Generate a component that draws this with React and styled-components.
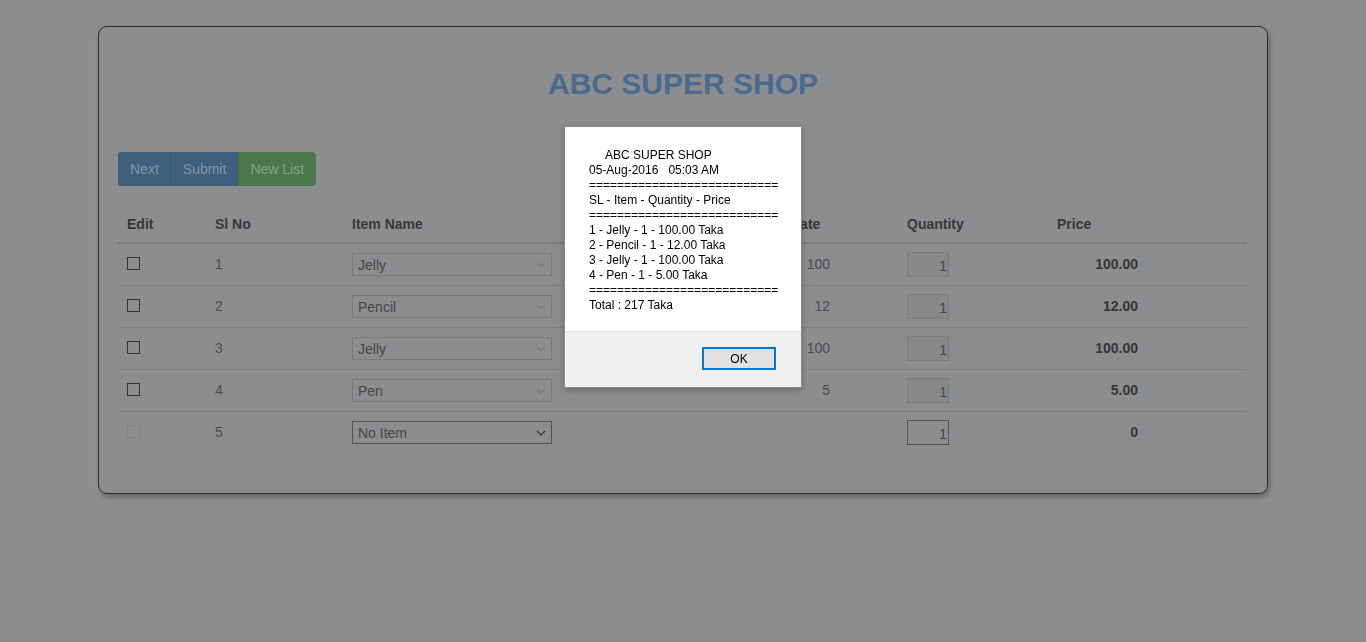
import React from "react";
import styled, { createGlobalStyle } from "styled-components";

const GlobalStyle = createGlobalStyle`
    html, body {
        margin: 0;
        padding: 0;
        background-color: #8c8d8f;
        font-family: "Liberation Sans", Arial, sans-serif;
        font-size: 14px;
        color: #4a4a4a;
    }
`;

const Page = styled.div`
    width: 1366px;
    height: 642px;
    padding-top: 26px;
    box-sizing: border-box;
    background-color: #8c8d8f;
`;

const Card = styled.div`
    width: 1170px;
    margin: 0 auto;
    box-sizing: border-box;
    padding: 20px 19px 40px;
    border: 1px solid #2a2b2d;
    border-radius: 9px;
    box-shadow: 2px 3px 5px rgba(0, 0, 0, 0.28);
`;

const Title = styled.h1`
    margin: 20px 0 52px;
    text-align: center;
    font-size: 30px;
    line-height: 33px;
    font-weight: bold;
    color: #486a8e;
`;

const ButtonGroup = styled.div`
    display: flex;
`;

const Button = styled.button`
    height: 34px;
    padding: 0 12px;
    border: none;
    font-family: "Liberation Sans", Arial, sans-serif;
    font-size: 14px;
    color: ${(p) => (p.$green ? "#8aa08b" : "#8596a6")};
    background-color: ${(p) => (p.$green ? "#4a784c" : "#3e5f7e")};
    box-shadow: ${(p) => (p.$green ? "none" : "inset -1px 0 0 #365672")};
    border-radius: ${(p) => (p.$first ? "3px 0 0 3px" : p.$last ? "0 4px 4px 0" : "0")};
`;

const Table = styled.table`
    width: 1129px;
    margin-top: 20px;
    border-collapse: collapse;
    table-layout: fixed;
`;

const Th = styled.th`
    height: 36px;
    box-sizing: border-box;
    padding: 8px;
    text-align: left;
    font-weight: bold;
    font-size: 14px;
    line-height: 20px;
    color: #373737;
    border-bottom: 2px solid #7b7c7e;
    &:first-child {
        padding-left: 9px;
    }
`;

const Td = styled.td`
    height: 42px;
    box-sizing: border-box;
    padding: 0 8px;
    border-top: 1px solid #7e7f81;
    font-size: 14px;
    color: #4a4a4a;
    vertical-align: middle;
`;

const RateTd = styled(Td)`
    text-align: right;
    padding-right: 69px;
`;

const PriceTd = styled(Td)`
    text-align: right;
    font-weight: bold;
    color: #353535;
`;

const Check = styled.span`
    display: block;
    width: 11px;
    height: 11px;
    margin: -1px 0 0 1px;
    border: 1px solid ${(p) => (p.$disabled ? "#838385" : "#333335")};
`;

const SelectBox = styled.div`
    position: relative;
    width: 200px;
    height: 23px;
    box-sizing: border-box;
    border: 1px solid ${(p) => (p.$active ? "#535355" : "#79797b")};
    padding-left: 5px;
    font-size: 14px;
    line-height: 22px;
    color: #454545;
`;

const Chevron = styled.svg`
    position: absolute;
    right: 5px;
    top: 8px;
`;

const QtyBox = styled.div`
    width: 42px;
    height: 25px;
    margin-top: 1px;
    box-sizing: border-box;
    border: 1px solid ${(p) => (p.$active ? "#535355" : "#7c7d7f")};
    background-color: ${(p) => (p.$active ? "transparent" : "#87888a")};
    text-align: right;
    padding: 3px 1px 0 0;
    font-size: 14px;
    line-height: 20px;
    color: #454545;
`;

const Dialog = styled.div`
    position: fixed;
    left: 564px;
    top: 126px;
    width: 238px;
    height: 262px;
    box-sizing: border-box;
    background-color: #ffffff;
    border: 1px solid #8a8a8a;
    box-shadow: 0 2px 6px rgba(0, 0, 0, 0.25);
    display: flex;
    flex-direction: column;
`;

const Message = styled.pre`
    flex: 1;
    margin: 0;
    padding: 21px 0 0 24px;
    font-family: "Liberation Sans", Arial, sans-serif;
    font-size: 12px;
    line-height: 15px;
    color: #000000;
    white-space: pre;
`;

const Footer = styled.div`
    height: 56px;
    box-sizing: border-box;
    background-color: #f0f0f0;
    border-top: 1px solid #e0e0e0;
    display: flex;
    justify-content: flex-end;
    align-items: flex-start;
    padding: 15px 25px 0 0;
`;

const OkButton = styled.button`
    width: 74px;
    height: 23px;
    box-sizing: border-box;
    background-color: #e1e1e1;
    border: 2px solid #0078d7;
    font-family: "Liberation Sans", Arial, sans-serif;
    font-size: 12px;
    color: #000000;
    padding: 0;
`;

const rows = [
    { sl: 1, item: "Jelly", rate: "100", price: "100.00" },
    { sl: 2, item: "Pencil", rate: "12", price: "12.00" },
    { sl: 3, item: "Jelly", rate: "100", price: "100.00" },
    { sl: 4, item: "Pen", rate: "5", price: "5.00" },
    { sl: 5, item: "No Item", rate: "", price: "0", active: true },
];

const eq = "===========================";
const receipt = [
    "     ABC SUPER SHOP",
    "05-Aug-2016   05:03 AM",
    eq,
    "SL - Item - Quantity - Price",
    eq,
    "1 - Jelly - 1 - 100.00 Taka",
    "2 - Pencil - 1 - 12.00 Taka",
    "3 - Jelly - 1 - 100.00 Taka",
    "4 - Pen - 1 - 5.00 Taka",
    eq,
    "Total : 217 Taka",
].join("\n");

const App = () => {
    return (
        <Page>
            <GlobalStyle />
            <Card>
                <Title>ABC SUPER SHOP</Title>
                <ButtonGroup>
                    <Button $first>Next</Button>
                    <Button>Submit</Button>
                    <Button $green $last>
                        New List
                    </Button>
                </ButtonGroup>
                <Table>
                    <colgroup>
                        <col style={{ width: 89 }} />
                        <col style={{ width: 137 }} />
                        <col style={{ width: 438 }} />
                        <col style={{ width: 117 }} />
                        <col style={{ width: 150 }} />
                        <col style={{ width: 97 }} />
                        <col style={{ width: 101 }} />
                    </colgroup>
                    <thead>
                        <tr>
                            <Th>Edit</Th>
                            <Th>Sl No</Th>
                            <Th>Item Name</Th>
                            <Th>Rate</Th>
                            <Th>Quantity</Th>
                            <Th>Price</Th>
                            <Th />
                        </tr>
                    </thead>
                    <tbody>
                        {rows.map((r) => (
                            <tr key={r.sl}>
                                <Td>
                                    <Check $disabled={r.active} />
                                </Td>
                                <Td>{r.sl}</Td>
                                <Td>
                                    <SelectBox $active={r.active}>
                                        {r.item}
                                        <Chevron width="10" height="6" viewBox="0 0 10 6">
                                            <path
                                                d="M1 1 L5 5 L9 1"
                                                fill="none"
                                                stroke={r.active ? "#333" : "#7a7a7c"}
                                                strokeWidth="1.2"
                                            />
                                        </Chevron>
                                    </SelectBox>
                                </Td>
                                <RateTd>{r.rate}</RateTd>
                                <Td>
                                    <QtyBox $active={r.active}>1</QtyBox>
                                </Td>
                                <PriceTd>{r.price}</PriceTd>
                                <Td />
                            </tr>
                        ))}
                    </tbody>
                </Table>
            </Card>
            <Dialog>
                <Message>{receipt}</Message>
                <Footer>
                    <OkButton>OK</OkButton>
                </Footer>
            </Dialog>
        </Page>
    );
};

export default App;
